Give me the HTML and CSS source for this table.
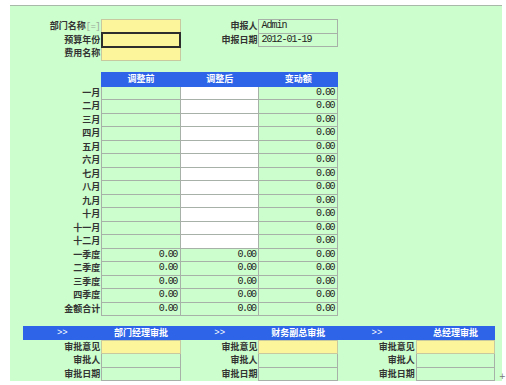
FILE: index.html
```html
<!DOCTYPE html>
<html>
<head>
<meta charset="utf-8">
<link rel="stylesheet" href="styles.css">
</head>
<body>
<div class="sheet">
  <table class="grid form">
    <colgroup><col><col><col><col><col><col></colgroup>
    <tr>
      <td class="lbl">部门名称<span class="eq">[=]</span></td>
      <td class="in yellow"></td>
      <td class="lbl">申报人</td>
      <td class="in mono">Admin</td>
      <td></td><td></td>
    </tr>
    <tr>
      <td class="lbl">预算年份</td>
      <td class="in yellow sel"><span class="handle"></span></td>
      <td class="lbl">申报日期</td>
      <td class="in mono">2012-01-19</td>
      <td></td><td></td>
    </tr>
    <tr>
      <td class="lbl">费用名称</td>
      <td class="in yellow"></td>
      <td></td><td></td><td></td><td></td>
    </tr>
  </table>

  <table class="grid data">
    <colgroup><col><col><col><col><col><col></colgroup>
    <tr class="head">
      <td class="blank"></td>
      <td class="hd">调整前</td>
      <td class="hd">调整后</td>
      <td class="hd">变动额</td>
      <td class="blank"></td><td class="blank"></td>
    </tr>
    <tr><td class="lbl">一月</td><td class="in"></td><td class="in white"></td><td class="in num">0.00</td><td></td><td></td></tr>
    <tr><td class="lbl">二月</td><td class="in"></td><td class="in white"></td><td class="in num">0.00</td><td></td><td></td></tr>
    <tr><td class="lbl">三月</td><td class="in"></td><td class="in white"></td><td class="in num">0.00</td><td></td><td></td></tr>
    <tr><td class="lbl">四月</td><td class="in"></td><td class="in white"></td><td class="in num">0.00</td><td></td><td></td></tr>
    <tr><td class="lbl">五月</td><td class="in"></td><td class="in white"></td><td class="in num">0.00</td><td></td><td></td></tr>
    <tr><td class="lbl">六月</td><td class="in"></td><td class="in white"></td><td class="in num">0.00</td><td></td><td></td></tr>
    <tr><td class="lbl">七月</td><td class="in"></td><td class="in white"></td><td class="in num">0.00</td><td></td><td></td></tr>
    <tr><td class="lbl">八月</td><td class="in"></td><td class="in white"></td><td class="in num">0.00</td><td></td><td></td></tr>
    <tr><td class="lbl">九月</td><td class="in"></td><td class="in white"></td><td class="in num">0.00</td><td></td><td></td></tr>
    <tr><td class="lbl">十月</td><td class="in"></td><td class="in white"></td><td class="in num">0.00</td><td></td><td></td></tr>
    <tr><td class="lbl">十一月</td><td class="in"></td><td class="in white"></td><td class="in num">0.00</td><td></td><td></td></tr>
    <tr><td class="lbl">十二月</td><td class="in"></td><td class="in white"></td><td class="in num">0.00</td><td></td><td></td></tr>
    <tr><td class="lbl">一季度</td><td class="in num">0.00</td><td class="in num">0.00</td><td class="in num">0.00</td><td></td><td></td></tr>
    <tr><td class="lbl">二季度</td><td class="in num">0.00</td><td class="in num">0.00</td><td class="in num">0.00</td><td></td><td></td></tr>
    <tr><td class="lbl">三季度</td><td class="in num">0.00</td><td class="in num">0.00</td><td class="in num">0.00</td><td></td><td></td></tr>
    <tr><td class="lbl">四季度</td><td class="in num">0.00</td><td class="in num">0.00</td><td class="in num">0.00</td><td></td><td></td></tr>
    <tr><td class="lbl">金额合计</td><td class="in num">0.00</td><td class="in num">0.00</td><td class="in num">0.00</td><td></td><td></td></tr>
  </table>

  <table class="grid approve">
    <colgroup><col><col><col><col><col><col></colgroup>
    <tr class="bar">
      <td class="arrow">&gt;&gt;</td><td class="title">部门经理审批</td>
      <td class="arrow">&gt;&gt;</td><td class="title">财务副总审批</td>
      <td class="arrow">&gt;&gt;</td><td class="title">总经理审批</td>
    </tr>
    <tr>
      <td class="lbl">审批意见</td><td class="in yellow"></td>
      <td class="lbl">审批意见</td><td class="in yellow"></td>
      <td class="lbl">审批意见</td><td class="in yellow"></td>
    </tr>
    <tr>
      <td class="lbl">审批人</td><td class="in"></td>
      <td class="lbl">审批人</td><td class="in"></td>
      <td class="lbl">审批人</td><td class="in"></td>
    </tr>
    <tr>
      <td class="lbl">审批日期</td><td class="in"></td>
      <td class="lbl">审批日期</td><td class="in"></td>
      <td class="lbl">审批日期</td><td class="in"></td>
    </tr>
  </table>
</div>
<span class="cursor">+</span>
</body>
</html>
```

FILE: styles.css
```css
html, body {
  margin: 0;
  padding: 0;
  background: #ffffff;
}
body {
  position: relative;
  width: 506px;
  height: 385px;
  overflow: hidden;
  font-family: "Noto Sans CJK SC", "Noto Sans", sans-serif;
  color: #2a2a2a;
}
.sheet {
  margin: 5px 0 0 10px;
  width: 492px;
  height: 376px;
  background: #ccfdcc;
  border-top: 1px solid #a9b9a9;
  box-sizing: border-box;
  padding: 13px 0 0 13px;
}
.grid {
  border-collapse: collapse;
  table-layout: fixed;
  width: 472px;
}
.grid col { width: 78.67px; }
.grid td {
  padding: 0 2px;
  height: 13.5px;
  line-height: 12px;
  font-size: 9px;
  white-space: nowrap;
  overflow: hidden;
  box-sizing: border-box;
}
.lbl {
  text-align: right;
  font-weight: 700;
  padding-right: 1px !important;
  color: #333;
}
.eq {
  font-family: "Liberation Mono", monospace;
  font-weight: 400;
  color: #9aa89a;
  font-size: 9px;
  letter-spacing: -0.6px;
}
.in {
  border: 1px solid #a7b1a7;
  background: #ccfdcc;
}
.yellow {
  background: #fdf59b;
  border-color: #c9c9a0;
}
.white { background: #ffffff; }
.sel {
  position: relative;
  outline: 2px solid #2d2d2d;
  outline-offset: -1px;
}
.handle {
  position: absolute;
  right: -3px;
  bottom: -3px;
  width: 4px;
  height: 4px;
  background: #2d2d2d;
}
.mono {
  font-family: "Liberation Mono", monospace;
  font-size: 10px !important;
  letter-spacing: -1px;
  color: #222;
}
.num {
  text-align: right;
  font-family: "Liberation Mono", monospace;
  font-size: 10px !important;
  letter-spacing: -1.5px;
  color: #222;
  padding-right: 3px !important;
}
.data { margin-top: 11px; }
.data .head td { height: 14px; }
.hd {
  background: #2e64e8;
  color: #fff;
  text-align: center;
  font-weight: 700;
  border: 1px solid #2e64e8;
}
.approve { margin-top: 10px; }
.bar td {
  background: #2e64e8;
  color: #fff;
  font-weight: 700;
  height: 14px;
  text-align: center;
}
.bar .arrow {
  font-family: "Liberation Mono", monospace;
  font-size: 9px;
  font-weight: 400;
}
.cursor {
  position: absolute;
  left: 499px;
  top: 373px;
  font-size: 8px;
  line-height: 8px;
  color: #777;
  font-family: "DejaVu Sans", sans-serif;
}
```
